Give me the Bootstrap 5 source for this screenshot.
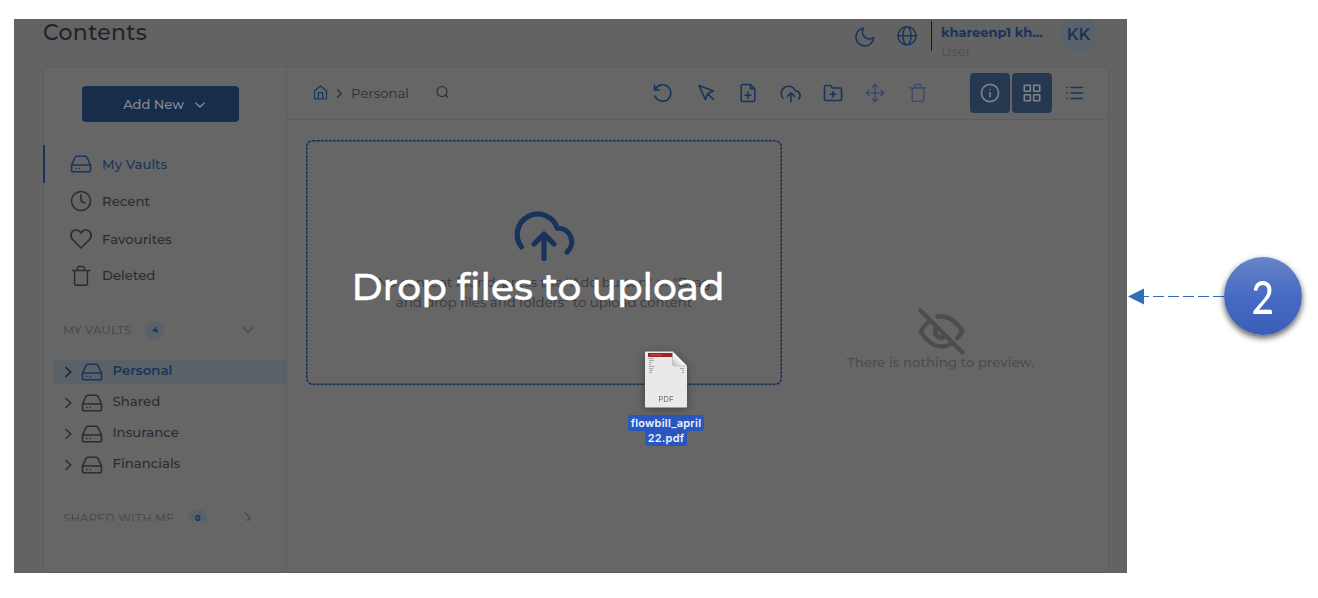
<!DOCTYPE html>
<html lang="en">
<head>
<meta charset="utf-8">
<meta name="viewport" content="width=device-width, initial-scale=1">
<title>Contents</title>
<link rel="stylesheet" href="https://cdn.jsdelivr.net/npm/bootstrap@5.3.0/dist/css/bootstrap.min.css">
<style>
:root{--ink:#2c2c33;--blue:#18345c;--line:#5d5d5f;--surface:#666}
body{font-family:Montserrat,Inter,"Open Sans",sans-serif;font-size:13.3px;font-weight:500;line-height:20px;color:var(--ink);background:#fff;overflow:hidden;width:1318px;height:598px}
svg{display:block;flex:none;overflow:visible}
.ic{fill:none;stroke:currentColor;stroke-width:1.6;stroke-linecap:round;stroke-linejoin:round}
.shell{width:1113px;height:554px;margin:19px 0 0 14px;background:#636363;overflow:hidden}
.topbar{height:47px;padding-left:29px;padding-right:30px}
.page-title{font-size:22px;line-height:26px;letter-spacing:.34px;font-weight:500;color:#22212e;padding-top:1px}
.blue{color:var(--blue)}
.user-box{width:117px;height:30px;border-left:1px solid #141a24;padding-left:9px;margin-left:14px}
.user-name{font-weight:700;font-size:13px;line-height:19px}
.user-role{font-size:13px;line-height:19px;letter-spacing:.2px;color:#4e4e50;font-weight:400}
.avatar{width:37px;height:37px;border-radius:50%;background:#59616a;font-size:16px;font-weight:600;color:#183455}
.board{width:1066px;height:507px;margin-left:29px;border:1px solid var(--line);border-radius:4px 4px 0 0;background:var(--surface)}
.side{width:243px;border-right:1px solid var(--line)}
.side-scroll{height:454px;overflow:hidden;margin-left:-1px}
.add-new{width:157px;height:36px;margin:19px 0 23px 39px;background:#172d4c;color:#858b94;border:0;border-radius:4px;font-size:13px;font-weight:500;padding:1px 0 0 7px}
.side-link{height:37.6px;padding-left:27px;gap:10px;color:var(--ink)}
.side-link.active{box-shadow:inset 2px 0 #17325c;color:#1a365d}
.side-link .drive{margin:0 -1px}
.group-head{height:24px;padding-left:20px;padding-right:32px;font-size:11.5px;letter-spacing:.25px;color:#4a4b4f}
.count{width:19px;height:19px;border-radius:50%;background:#59616a;color:#142f59;font-size:8px;font-weight:700;letter-spacing:0}
.node-row{height:24px;margin:0 0 7px 10px;padding-left:10px}
.node-row.active{background:#5b6267;color:#18345c;font-weight:600}
.node-row span{padding-bottom:4px}
.node-row .drive{margin:-1px 8.5px 0 6px}
.toolbar{height:53px;border-bottom:1px solid var(--line);padding-left:26px;padding-right:23.5px}
.tools{gap:22.4px}
.mode{width:40px;height:40px;border-radius:4px;background:#26384f;color:#7c838d}
.faded{color:#384c68}
.dropzone{width:476px;height:245px;margin:20px 0 0 19px;padding-top:65px}
.dropzone p{margin:3px 0 0;text-align:center;white-space:pre-line;font-size:13.3px;line-height:20px;color:#34353b;font-weight:400}
.preview{width:326px;padding:181px 9px 0 0;color:#4b4b50}
.drop-title{position:absolute;left:243px;top:264px;width:590px;text-align:center;font-size:37.5px;line-height:46px;color:#fff;font-weight:500;-webkit-text-stroke:.4px #fff}
.dragged{position:absolute;left:616px;top:350px;width:100px;font-family:Inter,sans-serif;font-size:11px;font-weight:600;line-height:17px;color:#eef3ff}
.dragged b{background:#2a57bf;border-radius:3px;padding:0 3px;height:16px;letter-spacing:.25px;font-weight:600}
.dragged b+b{margin-top:-1px}
.callout-step{position:absolute;left:1128px;top:257px}
.step{width:78px;height:78px;border-radius:50%;background:linear-gradient(#6884c8,#466bc4 50%,#3b5eb5);box-shadow:0 3px 6px rgba(0,0,0,.65);color:#fff;font-family:Lato,"Open Sans",sans-serif;font-size:44px;line-height:44px}
.step span{transform:scale(.88,1.06)}
</style>
<script src="https://cdn.jsdelivr.net/npm/bootstrap@5.3.0/dist/js/bootstrap.bundle.min.js"></script>
</head>
<body class="position-relative">
<svg width="0" height="0" class="position-absolute">
  <symbol id="drive" viewBox="0 0 24 24"><path d="M2.500 13 6 5.500Q6.500 4.300 7.800 4.300h8.400q1.300 0 1.800 1.200l3.500 7.500V18a1.800 1.800 0 0 1-1.800 1.800H4.300A1.800 1.800 0 0 1 2.500 18zM2.500 13h19M6.800 16.500h.1M10.300 16.500h.1"/></symbol>
  <symbol id="trash" viewBox="0 0 24 24"><path d="M2.500 6h19M5 6v14a2 2 0 0 0 2 2h10a2 2 0 0 0 2-2V6M8 6V4a2.300 2.300 0 0 1 2.300-2.300h3.400A2.300 2.300 0 0 1 16 4v2"/></symbol>
  <symbol id="upload" viewBox="0 0 24 24"><path d="M4.200 18A7.600 7.600 0 1 1 17 10.200A4.900 4.900 0 0 1 20.300 18.800M12.500 21.500V13M9 15.800l3.500-3.500 3.500 3.500"/></symbol>
  <symbol id="right" viewBox="0 0 12 12"><path d="M3.300 1 8.500 6l-5.200 5"/></symbol>
  <symbol id="down" viewBox="0 0 12 12"><path d="M1 3.500 6 8.500l5-5"/></symbol>
</svg>

<main class="shell">
  <header class="topbar d-flex align-items-start">
    <h1 class="page-title mb-0 me-auto">Contents</h1>
    <svg class="ic blue" style="margin:8px 22px 0 0" width="20" height="20" viewBox="0 0 20 20"><path d="M8.500 1.300A7 7 0 0 0 18.700 10.500 8.900 8.900 0 1 1 8.500 1.300z"/></svg>
    <svg class="ic blue mt-2" style="padding-bottom:1px" width="20" height="20" viewBox="0 0 20 20"><circle cx="10" cy="9.300" r="9.500"/><ellipse cx="10" cy="9.300" rx="4.300" ry="9.500"/><path d="M.8 9.300h18.400"/></svg>
    <div class="user-box d-flex flex-column" style="margin-top:2px"><span class="user-name blue text-nowrap" style="padding-top:2px">khareenp1 kh...</span><span class="user-role">User</span></div>
    <div class="avatar d-flex align-items-center justify-content-center" style="margin-left:12px;margin-top:-3px">KK</div>
  </header>

  <div class="board d-flex">
    <aside class="side flex-shrink-0">
      <div class="side-scroll">
        <button class="add-new btn d-flex align-items-center justify-content-center">Add New <svg class="ic" style="margin-left:11px" width="10" height="10"><use href="#down"/></svg></button>
        <nav>
          <a class="side-link active d-flex align-items-center text-decoration-none"><svg class="ic drive" width="24" height="24"><use href="#drive"/></svg>My Vaults</a>
          <a class="side-link d-flex align-items-center text-decoration-none"><svg class="ic" width="22" height="22" viewBox="0 0 22 22"><circle cx="11" cy="11" r="9.500"/><path d="M11 4.800V11l4.200 2.200"/></svg>Recent</a>
          <a class="side-link d-flex align-items-center text-decoration-none"><svg class="ic" width="22" height="22" viewBox="0 0 22 22"><path d="M11 20 2.500 11.500C-1 7.500 1.500 2 6.300 2 8.500 2 10 3.200 11 5c1-1.800 2.500-3 4.700-3 4.800 0 7.300 5.500 3.800 9.500z"/></svg>Favourites</a>
          <a class="side-link d-flex align-items-center text-decoration-none pb-1"><svg class="ic" width="22" height="22" style="margin-top:2px"><use href="#trash"/></svg>Deleted</a>
        </nav>
        <div class="group-head d-flex align-items-center" style="margin:23px 0 18px"><span>MY VAULTS</span><span class="count d-flex align-items-center justify-content-center" style="margin-left:14px">4</span><svg class="ic ms-auto" width="12" height="12"><use href="#down"/></svg></div>
        <div class="node-row active d-flex align-items-center"><svg class="ic" width="11" height="12" style="color:#1d1d22"><use href="#right"/></svg><svg class="ic drive" width="24" height="24"><use href="#drive"/></svg><span>Personal</span></div>
        <div class="node-row d-flex align-items-center"><svg class="ic" width="11" height="12"><use href="#right"/></svg><svg class="ic drive" width="24" height="24"><use href="#drive"/></svg><span>Shared</span></div>
        <div class="node-row d-flex align-items-center"><svg class="ic" width="11" height="12"><use href="#right"/></svg><svg class="ic drive" width="24" height="24"><use href="#drive"/></svg><span>Insurance</span></div>
        <div class="node-row d-flex align-items-center"><svg class="ic" width="11" height="12"><use href="#right"/></svg><svg class="ic drive" width="24" height="24"><use href="#drive"/></svg><span>Financials</span></div>
        <div class="group-head d-flex align-items-center" style="margin-top:29px"><span>SHARED WITH ME</span><span class="count d-flex align-items-center justify-content-center" style="margin-left:14px">0</span><svg class="ic ms-auto" width="12" height="12"><use href="#right"/></svg></div>
      </div>
    </aside>

    <section class="flex-grow-1">
      <div class="toolbar d-flex align-items-center">
        <svg class="ic blue" style="stroke-width:1.200;margin-top:-2px" width="15" height="15" viewBox="0 0 15 15"><path d="M1.500 5.800 7.500 1l6 4.800v7.400a.8.8 0 0 1-.8.800H2.300a.8.8 0 0 1-.8-.8zM5.300 14V7.700h4.400V14"/></svg>
        <svg class="ic" style="margin:0 7px 0 7px" width="9" height="9"><use href="#right"/></svg>
        <span style="font-weight:400;padding-bottom:1px">Personal</span>
        <svg class="ic me-auto" style="margin-left:27px;margin-top:-2px;stroke-width:1.100" width="13" height="13" viewBox="0 0 13 13"><circle cx="6" cy="5.500" r="5"/><path d="m9.500 9 2.300 2.300"/></svg>
        <div class="tools blue d-flex align-items-center">
          <svg class="ic" width="20" height="20" viewBox="0 0 20 20"><path d="M1.500 2v5h5M2 7a8.200 8.200 0 1 1 0 6"/></svg>
          <svg class="ic" width="20" height="20" viewBox="0 0 20 20"><path d="M3 2.500 17.500 8l-5.700 2.400-2.400 6.100zM12 11l5.500 5.500"/></svg>
          <svg class="ic" width="20" height="20" viewBox="0 0 20 20"><path d="M12.500 1.500H5a1.800 1.800 0 0 0-1.800 1.800v13.400A1.800 1.800 0 0 0 5 18.500h10a1.800 1.800 0 0 0 1.800-1.800V5.800zM12.500 1.500v4.300h4.300M10 9.300v6M7 12.300h6"/></svg>
          <svg class="ic" style="margin:-2px -1.500px 0" width="23" height="23"><use href="#upload"/></svg>
          <svg class="ic" width="20" height="20" viewBox="0 0 20 20"><path d="M1.500 16.300V3.700A1.200 1.200 0 0 1 2.700 2.500h4.800l2 2.500h7.800a1.200 1.200 0 0 1 1.200 1.200v10.100a1.200 1.200 0 0 1-1.200 1.200H2.700a1.200 1.200 0 0 1-1.200-1.200zM10 8.500v5.600M7.200 11.300h5.600"/></svg>
          <svg class="ic faded" width="20" height="20" viewBox="0 0 20 20"><path d="M10 1.500v17M1.500 10h17M7.300 4 10 1.300 12.700 4M7.300 16l2.700 2.700 2.700-2.700M4 7.300 1.300 10 4 12.700M16 7.300l2.700 2.700-2.700 2.700"/></svg>
          <svg class="ic faded" width="20" height="20"><use href="#trash"/></svg>
        </div>
        <div class="d-flex align-items-center" style="margin-left:42px;gap:2px">
          <span class="mode d-flex align-items-center justify-content-center"><svg class="ic" width="20" height="20" viewBox="0 0 20 20"><circle cx="10" cy="10" r="8.600"/><path d="M10 9.500v4.300M10 6.500v.1"/></svg></span>
          <span class="mode d-flex align-items-center justify-content-center"><svg class="ic" width="20" height="20" viewBox="0 0 20 20"><path d="M2.300 2.300h6v6h-6zM11.700 2.300h6v6h-6zM2.300 11.700h6v6h-6zM11.700 11.700h6v6h-6z"/></svg></span>
        </div>
        <svg class="ic blue" style="margin-left:13px" width="20" height="20" viewBox="0 0 20 20"><path d="M6 4.500h11.500M6 10h11.500M6 15.500h11.500M2 4.500h.2M2 10h.2M2 15.500h.2"/></svg>
      </div>
      <div class="d-flex">
        <div class="dropzone flex-shrink-0 position-relative">
          <svg class="position-absolute top-0 start-0" width="476" height="245"><rect x=".75" y=".75" width="474.500" height="243.500" rx="6" fill="none" stroke="#162f55" stroke-width="1.500" stroke-dasharray="3 1"/></svg>
          <svg class="ic blue mx-auto" style="stroke-width:5.200" width="64" height="64" viewBox="0 0 64 64"><path d="M9.500 42A20.500 20.500 0 1 1 45.300 23.300A13.500 13.500 0 0 1 55 47M32 53.500V30M22 39l10-10 10 10"/></svg>
          <p>No content found, press the "Add button" or "Drag
and drop files and folders" to upload content</p>
        </div>
        <div class="preview text-center">
          <svg class="ic mx-auto" style="stroke-width:4.300;margin-top:7px" width="46" height="46" viewBox="0 0 46 46"><path d="m2.500 2.500 42 42M12 13C8.500 15.300 5.500 19 2.800 23.500 8 32 15 38.500 23.500 38.500c4 0 7.200-1.200 10.500-3.500M19.500 8.700C31 7 38.500 13.500 44.500 23.500L39 30M17.500 20.500c-2 5 2 10 8 9"/></svg>
          <div style="margin-top:-2px">There is nothing to preview.</div>
        </div>
      </div>
    </section>
  </div>
</main>

<div class="drop-title text-nowrap">Drop files to upload</div>
<div class="dragged d-flex flex-column align-items-center">
  <svg width="50" height="65" viewBox="0 0 50 65" style="filter:drop-shadow(0 2px 5px rgba(0,0,0,.35))">
    <defs><linearGradient id="fold" x1="0" y1="1" x2="1" y2="0"><stop stop-color="#b8b8b8"/><stop offset=".5" stop-color="#fff"/></linearGradient></defs>
    <path d="M5 1.500h27L46 16v40.500a1 1 0 0 1-1 1H5a1 1 0 0 1-1-1v-54a1 1 0 0 1 1-1z" fill="#e9e9e9"/>
    <path d="M7 3h25v4H7z" fill="#9e2529"/><path d="M9 5h12" stroke="#b85558"/>
    <path d="M7.500 8.500h5M8 10.500h5M8 12.500h3M8 14.500h2M7.500 16.500h6M8 18.500h4M8 20.500h4M8 22.500h3M39 18.500h4M41 20.500h2M41 22.500h2" stroke="#aaa"/>
    <path d="M31.500 1.500 46 16H33.500a2 2 0 0 1-2-2z" fill="url(#fold)" stroke="#aaa" stroke-width=".5"/>
    <text x="25" y="52" text-anchor="middle" font-family="Inter,sans-serif" font-size="8" font-weight="400" fill="#707070">PDF</text>
  </svg>
  <b>flowbill_april</b><b>22.pdf</b>
</div>
<div class="callout-step d-flex align-items-center">
  <svg width="96" height="18" viewBox="0 0 96 18"><path d="M0 9.500 16 1.500v16z" fill="#2e6fb8"/><path d="M96 9.500H12" stroke="#2e6fb8" stroke-dasharray="11 4"/></svg>
  <div class="step d-flex align-items-center justify-content-center"><span>2</span></div>
</div>
</body>
</html>
